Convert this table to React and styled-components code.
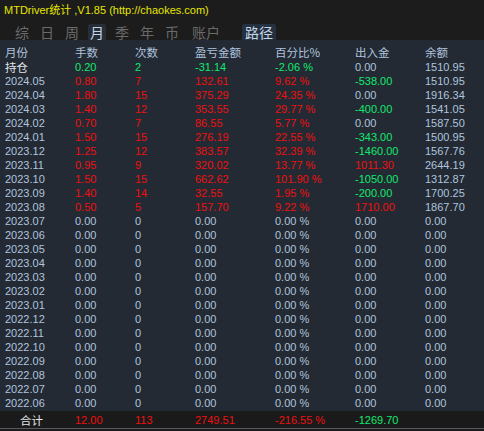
import React from 'react';
import styled, { createGlobalStyle } from 'styled-components';

const GlobalStyle = createGlobalStyle`
  html, body {
    margin: 0;
    padding: 0;
    background: #1c1c1c;
  }
  body {
    font-family: "Liberation Sans", Arial, "Noto Sans CJK SC", sans-serif;
  }
`;

const Window = styled.div`
  width: 484px;
  height: 431px;
  background: #1c1c1c;
  overflow: hidden;
  display: flex;
  flex-direction: column;
`;

const TitleBar = styled.div`
  height: 24px;
  padding: 3px 0 0 4px;
  box-sizing: border-box;
  color: #e6e600;
  font-size: 11px;
  line-height: 14px;
  white-space: nowrap;
`;

const Tabs = styled.div`
  height: 16px;
  display: flex;
  align-items: stretch;
  padding-left: 13px;
`;

const Tab = styled.div`
  padding: 0 2px;
  margin-right: ${p => p.gap ?? 7}px;
  font-family: "Noto Sans CJK SC", sans-serif;
  font-size: 14px;
  line-height: 16px;
  color: ${p => (p.active ? '#c4d4e6' : '#6a6a6a')};
  background: ${p => (p.active ? '#262d37' : 'transparent')};
  border-radius: 2px 2px 0 0;
`;

const PathTab = styled(Tab)`
  margin-left: 13px;
  padding: 0 3px;
  color: #c8d6e6;
  background: #243140;
`;

const Table = styled.div`
  background: #232a33;
  padding: 5px 0 1px;
`;

const Row = styled.div`
  display: grid;
  grid-template-columns: 70px 60px 60px 80px 80px 70px 1fr;
  padding-left: ${p => p.indent ?? 5}px;
  height: ${p => p.h ?? 14}px;
  font-size: 11px;
  line-height: 14px;
  white-space: nowrap;
`;

const Cell = styled.span`
  line-height: 14px;
  color: ${p =>
    p.tone === 'red' ? '#ee1010'
    : p.tone === 'green' ? '#12e86e'
    : p.tone === 'white' ? '#e2e6ea'
    : '#b0c4de'};
  font-family: ${p => (p.cjk ? '"Noto Sans CJK SC", sans-serif' : 'inherit')};
  font-size: ${p => (p.cjk ? '11.5px' : 'inherit')};
`;

const Footer = styled.div`
  background: #1a1a1a;
  height: 17px;
  display: flex;
  align-items: center;
  border-bottom: 1px solid #555a60;
`;

const FooterRow = styled(Row)`
  width: 100%;
  grid-template-columns: 55px 60px 60px 80px 80px 70px 1fr;
`;

const cols = ['手数', '次数', '盈亏金额', '百分比%', '出入金', '余额'];

const data = [
  ['2024.05', '0.80', '7', '132.61', '9.62 %', '-538.00', '1510.95'],
  ['2024.04', '1.80', '15', '375.29', '24.35 %', '0.00', '1916.34'],
  ['2024.03', '1.40', '12', '353.55', '29.77 %', '-400.00', '1541.05'],
  ['2024.02', '0.70', '7', '86.55', '5.77 %', '0.00', '1587.50'],
  ['2024.01', '1.50', '15', '276.19', '22.55 %', '-343.00', '1500.95'],
  ['2023.12', '1.25', '12', '383.57', '32.39 %', '-1460.00', '1567.76'],
  ['2023.11', '0.95', '9', '320.02', '13.77 %', '1011.30', '2644.19'],
  ['2023.10', '1.50', '15', '662.62', '101.90 %', '-1050.00', '1312.87'],
  ['2023.09', '1.40', '14', '32.55', '1.95 %', '-200.00', '1700.25'],
  ['2023.08', '0.50', '5', '157.70', '9.22 %', '1710.00', '1867.70'],
];

const emptyMonths = [
  '2023.07', '2023.06', '2023.05', '2023.04', '2023.03', '2023.02', '2023.01',
  '2022.12', '2022.11', '2022.10', '2022.09', '2022.08', '2022.07', '2022.06',
];

const flowTone = v => (v === '0.00' ? 'blue' : v.startsWith('-') ? 'green' : 'red');

export default function App() {
  return (
    <Window>
      <GlobalStyle />
      <TitleBar>MTDriver统计 ,V1.85 (http://chaokes.com)</TitleBar>
      <Tabs>
        <Tab>综</Tab>
        <Tab>日</Tab>
        <Tab>周</Tab>
        <Tab active>月</Tab>
        <Tab>季</Tab>
        <Tab>年</Tab>
        <Tab gap={9}>币</Tab>
        <Tab>账户</Tab>
        <PathTab active>路径</PathTab>
      </Tabs>
      <Table>
        <Row h={15}>
          <Cell cjk>月份</Cell>
          {cols.map(c => <Cell key={c} cjk>{c}</Cell>)}
        </Row>
        <Row>
          <Cell cjk tone="white">持仓</Cell>
          <Cell tone="green">0.20</Cell>
          <Cell tone="green">2</Cell>
          <Cell tone="green">-31.14</Cell>
          <Cell tone="green">-2.06 %</Cell>
          <Cell>0.00</Cell>
          <Cell>1510.95</Cell>
        </Row>
        {data.map(r => (
          <Row key={r[0]}>
            <Cell>{r[0]}</Cell>
            <Cell tone="red">{r[1]}</Cell>
            <Cell tone="red">{r[2]}</Cell>
            <Cell tone="red">{r[3]}</Cell>
            <Cell tone="red">{r[4]}</Cell>
            <Cell tone={flowTone(r[5])}>{r[5]}</Cell>
            <Cell>{r[6]}</Cell>
          </Row>
        ))}
        {emptyMonths.map(m => (
          <Row key={m}>
            <Cell>{m}</Cell>
            <Cell>0.00</Cell>
            <Cell>0</Cell>
            <Cell>0.00</Cell>
            <Cell>0.00 %</Cell>
            <Cell>0.00</Cell>
            <Cell>0.00</Cell>
          </Row>
        ))}
      </Table>
      <Footer>
        <FooterRow indent={20}>
          <Cell cjk tone="white">合计</Cell>
          <Cell tone="red">12.00</Cell>
          <Cell tone="red">113</Cell>
          <Cell tone="red">2749.51</Cell>
          <Cell tone="red">-216.55 %</Cell>
          <Cell tone="green">-1269.70</Cell>
          <Cell />
        </FooterRow>
      </Footer>
    </Window>
  );
}
